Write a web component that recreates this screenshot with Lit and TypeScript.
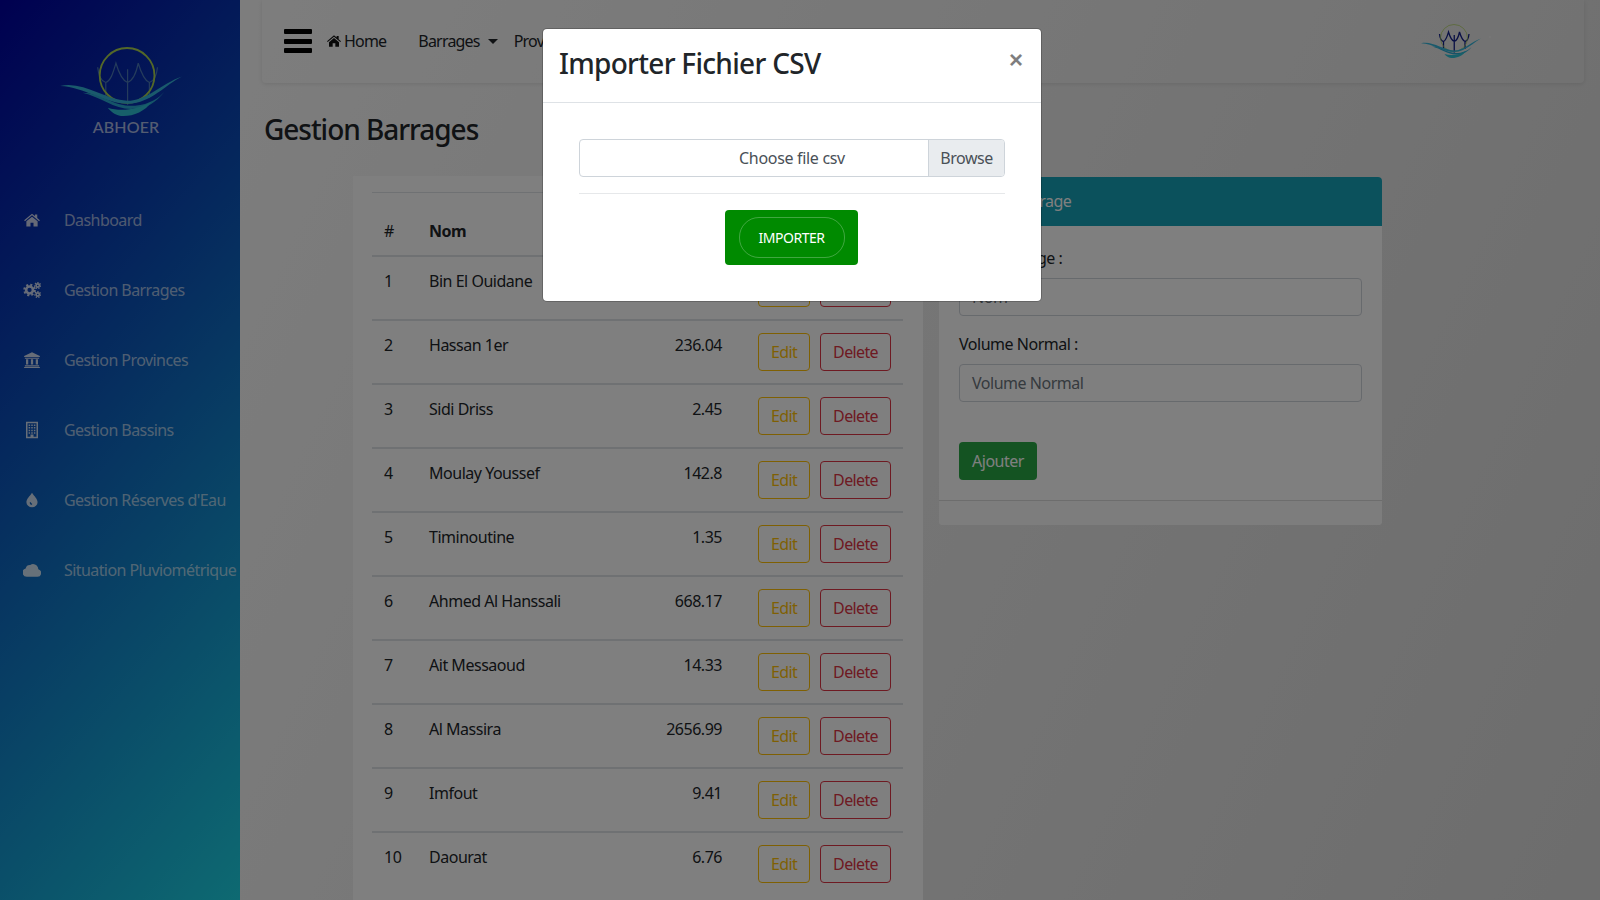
import { LitElement, html, css, svg } from "lit";
import { customElement } from "lit/decorators.js";

const rows: [number, string, string][] = [
  [1, "Bin El Ouidane", "1384.3"],
  [2, "Hassan 1er", "236.04"],
  [3, "Sidi Driss", "2.45"],
  [4, "Moulay Youssef", "142.8"],
  [5, "Timinoutine", "1.35"],
  [6, "Ahmed Al Hanssali", "668.17"],
  [7, "Ait Messaoud", "14.33"],
  [8, "Al Massira", "2656.99"],
  [9, "Imfout", "9.41"],
  [10, "Daourat", "6.76"],
];

const icons = {
  home: { vb: "0 0 24 24", p: svg`<path d="M12 3.5 1.5 12.3l1.1 1.3L12 5.8l9.4 7.8 1.1-1.3-3.5-2.9V4.5h-3v2.3zM12 7.5l-7.5 6.2V20.5h5.5v-5h4v5h5.5v-6.8z"/>` },
  cogs: { vb: "1 1 22 22", p: svg`<g fill="none" stroke="currentColor"><circle cx="9" cy="12" r="4.2" stroke-width="3.2"/><circle cx="9" cy="12" r="6.6" stroke-width="2.2" stroke-dasharray="2.6 2.6"/><circle cx="19" cy="6.5" r="2" stroke-width="2"/><circle cx="19" cy="6.5" r="3.6" stroke-width="1.5" stroke-dasharray="1.6 1.6"/><circle cx="19" cy="17.5" r="2" stroke-width="2"/><circle cx="19" cy="17.5" r="3.6" stroke-width="1.5" stroke-dasharray="1.6 1.6"/></g>` },
  bank: { vb: "0 0 24 24", p: svg`<path d="M12 1.5 1.5 6.5V8h21V6.5zM2.5 9v1.2h19V9zM4 11v7h3v-7zM10.5 11v7h3v-7zM17 11v7h3v-7zM2.5 19v1.5h19V19zM1.5 21.2v1.6h21v-1.6z"/>` },
  building: { vb: "0 0 24 24", p: svg`<path fill-rule="evenodd" d="M4 1h16v22H4zM6 3v18h4v-3h4v3h4V3zM7.5 4.5h2v2h-2zM11 4.5h2v2h-2zM14.5 4.5h2v2h-2zM7.5 8h2v2h-2zM11 8h2v2h-2zM14.5 8h2v2h-2zM7.5 11.5h2v2h-2zM11 11.5h2v2h-2zM14.5 11.5h2v2h-2zM7.5 15h2v2h-2zM11 15h2v2h-2zM14.5 15h2v2h-2z"/>` },
  tint: { vb: "1.5 1.5 21 21", p: svg`<path fill-rule="evenodd" d="M12 3.5c3 4.6 6.5 7.2 6.5 11a6.5 6 0 0 1-13 0c0-3.8 3.500-6.400 6.500-11zM9.400 14.500a2.700 2.800 0 0 0 2.700 3v-1.500a1.300 1.300 0 0 1-1.300-1.500z"/>` },
  cloud: { vb: "1.5 1.5 21 21", p: svg`<path d="M6 20a5 5 0 0 1-1.400-9.800A5.200 5.200 0 0 1 10 6.200a6 6 0 0 1 3.200-1.200 6.300 6.300 0 0 1 6.200 6 4.600 4.600 0 0 1-1 9z"/>` },
};

const navItems: [keyof typeof icons, string][] = [
  ["home", "Dashboard"],
  ["cogs", "Gestion Barrages"],
  ["bank", "Gestion Provinces"],
  ["building", "Gestion Bassins"],
  ["tint", "Gestion Réserves d'Eau"],
  ["cloud", "Situation Pluviométrique"],
];

const logo = (dark: boolean) => svg`
  <g fill="none" stroke="${dark ? "#13208a" : "#4a78b8"}" stroke-width="${dark ? 2.6 : 1.2}">
    <path d="M37 20C38 30 41 34 45 35C50 33 52 26 55 16C58 26 61 33 66.500 35C72 33 75 26 77 16C80 26 83 33 88 35C92 34 95 30 96 20M45 35V50M66.500 22V57M88 35V50"/>
  </g>
  <circle cx="66" cy="28" r="27" fill="none" stroke="#a8d050" stroke-width="1.800" opacity="${dark ? 0.75 : 1}"/>
  <path fill="#35b4d8" d="M0 38.500C22 33 44 52 66 53 86 53 100 36 120 29 104 37 90 55 67 56 44 56 24 39.500 0 38.500Z"/>
  <path fill="#2aa9d0" d="M22 45C40 45 52 59 74 58 88 57 98 50 103 44 94 55 86 61 72 61 54 62 40 49 22 45Z"/>
  <path fill="#2fc0d4" d="M47 60C60 64 76 62 90 54 84 64 70 69 60 68 54 67 50 64 47 60Z"/>
`;

@customElement("app-root")
export class AppRoot extends LitElement {
  static styles = css`
    :host {
      display: block;
      position: relative;
      width: 1600px;
      height: 900px;
      overflow: hidden;
      font-family: "Noto Sans", "Open Sans", sans-serif;
      font-size: 16px;
      line-height: 24px;
      color: #212529;
      letter-spacing: -0.03em;
    }
    * { box-sizing: border-box; }
    .page { display: flex; height: 900px; background: #f6f6f6; }

    .side {
      width: 240px;
      flex: none;
      background: linear-gradient(130deg, #0000a0 0%, #1cd4e4 100%);
      display: flex;
      flex-direction: column;
    }
    .brand { height: 185px; padding: 47px 0 0 60px; }
    .brand svg { display: block; }
    .brand-name {
      width: 132px;
      text-align: center;
      font-family: "Lato", sans-serif;
      font-size: 16px;
      font-weight: 500;
      letter-spacing: 0.01em;
      color: rgba(255, 255, 255, 0.68);
      line-height: 20px;
      margin-top: -2px;
    }
    .snav { display: flex; flex-direction: column; letter-spacing: -0.036em; }
    .snav a {
      height: 70px;
      display: flex;
      align-items: center;
      color: rgba(255, 255, 255, 0.62);
      white-space: nowrap;
    }
    .snav .ic { width: 64px; display: flex; justify-content: center; flex: none; color: rgba(255, 255, 255, 0.8); }
    .snav svg { width: 18px; height: 18px; fill: currentColor; display: block; }

    .main { flex: 1; min-width: 0; padding: 0 16px 0 22px; background: linear-gradient(115deg, #fbfbfb 0%, #dadada 100%); }
    .topbar {
      height: 83px;
      background: rgba(255, 255, 255, 0.12);
      box-shadow: 0 1px 4px rgba(0, 0, 0, 0.1);
      border-radius: 0 0 4px 4px;
      display: flex;
      align-items: flex-start;
      padding: 29px 0 0 22px;
    }
    .burger { width: 28px; height: 24px; display: flex; flex-direction: column; justify-content: space-between; flex: none; }
    .burger i { display: block; height: 5px; background: #000; border-radius: 1px; }
    .topnav { display: flex; align-items: center; margin-left: 14px; height: 24px; white-space: nowrap; letter-spacing: -0.05em; }
    .topnav svg { width: 16px; height: 16px; fill: #111; margin-right: 2px; flex: none; }
    .topnav .home { display: flex; align-items: center; margin-right: 32px; }
    .topnav .caret {
      display: inline-block; margin-left: 8px; margin-right: 16px;
      border-top: 5px solid #212529; border-left: 5px solid transparent; border-right: 5px solid transparent;
    }
    .toplogo { margin-left: auto; margin-right: 90px; margin-top: -5px; }
    .toplogo svg { display: block; }

    h2 { font-size: 28px; font-weight: 500; line-height: 34px; margin: 29px 0 0 2px; letter-spacing: -0.037em; }
    .cols { display: flex; align-items: flex-start; margin: 30px 0 0 91px; gap: 16px; }

    .tcard { width: 570px; background: #fff; padding: 16px 19px 0; flex: none; height: 900px; }
    table { width: 531px; border-collapse: collapse; table-layout: fixed; }
    th, td { padding: 12px; text-align: left; vertical-align: top; border-top: 2px solid #dee2e6; font-weight: 400; }
    thead th { border-top: 1px solid #dee2e6; font-weight: 700; padding-top: 26px; }
    thead th.hash { font-weight: 400; }
    thead tr { border-bottom: 2px solid #dee2e6; }
    .cn { width: 45px; }
    .cv { width: 329px; }
    td.name { padding-right: 24px; }
    .nv { display: flex; justify-content: space-between; }
    .acts { display: flex; gap: 10px; }
    .btn { height: 38px; border-radius: 4px; border: 1px solid; display: flex; align-items: center; padding: 0 12px; line-height: 1; letter-spacing: -0.04em; }
    .edit { border-color: #ffc107; color: #ffc107; }
    .del { border-color: #dc3545; color: #dc3545; }

    .fcard { width: 443px; flex: none; background: #fff; border-radius: 4px; overflow: hidden; margin-top: 1px; }
    .fhead { height: 49px; background: #17a2b8; color: #fff; padding: 12px 20px; }
    .fbody { padding: 20px; height: 274px; }
    label { display: block; margin-bottom: 8px; }
    .input {
      height: 38px; border: 1px solid #ced4da; border-radius: 4px; padding: 6px 12px; color: #6c757d; margin-bottom: 16px; background: #fff;
    }
    .add { display: inline-flex; align-items: center; margin-top: 24px; height: 38px; padding: 0 13px; background: #28a745; color: #fff; border-radius: 4px; }
    .ffoot { height: 25px; border-top: 1px solid rgba(0, 0, 0, 0.125); background: #fafafa; }

    .backdrop { position: absolute; inset: 0; background: rgba(0, 0, 0, 0.5); }
    .modal {
      position: absolute; left: 543px; top: 29px; width: 498px; height: 272px;
      background: #fff; border-radius: 4px; box-shadow: 0 0 0 1px rgba(0, 0, 0, 0.2);
    }
    .mhead { height: 74px; border-bottom: 1px solid #dee2e6; padding: 17px 16px 0; display: flex; justify-content: space-between; }
    .mhead h3 { margin: 0; font-size: 28px; font-weight: 500; line-height: 34px; letter-spacing: -0.025em; }
    .close { font-family: "Liberation Sans", sans-serif; font-size: 24px; font-weight: 700; color: #000; opacity: 0.5; line-height: 24px; margin: 2px 2px 0 0; letter-spacing: 0; }
    .mbody { padding: 36px 36px 0; }
    .file { display: flex; height: 38px; border: 1px solid #ced4da; border-radius: 4px; overflow: hidden; color: #495057; }
    .fname { flex: 1; text-align: center; line-height: 36px; padding-left: 76px; letter-spacing: -0.02em; }
    .browse { width: 76px; text-align: center; background: #e9ecef; border-left: 1px solid #ced4da; line-height: 36px; }
    .mbody hr { border: 0; border-top: 1px solid #e6e8ea; margin: 16px 0; }
    .imp { width: 133px; height: 55px; margin-left: 146px; background: #008a00; border-radius: 4px; display: flex; align-items: center; justify-content: center; }
    .imp span { width: 106px; height: 41px; border: 1px solid rgba(255, 255, 255, 0.25); border-radius: 20px; display: flex; align-items: center; justify-content: center; color: #fff; font-size: 14px; }
  `;

  render() {
    return html`
      <div class="page">
        <aside class="side">
          <div class="brand">
            <svg width="123" height="72" viewBox="0 0 121 71">${logo(false)}</svg>
            <div class="brand-name">ABHOER</div>
          </div>
          <nav class="snav">
            ${navItems.map(
              ([i, t]) => html`<a><span class="ic"><svg viewBox="${icons[i].vb}">${icons[i].p}</svg></span>${t}</a>`
            )}
          </nav>
        </aside>
        <div class="main">
          <div class="topbar">
            <div class="burger"><i></i><i></i><i></i></div>
            <div class="topnav">
              <span class="home"><svg viewBox="0 0 24 24">${icons.home.p}</svg>Home</span>
              <span>Barrages</span><span class="caret"></span>
              <span>Provinces</span>
            </div>
            <div class="toplogo">
              <svg width="73" height="36" viewBox="0 0 146 72">
                ${logo(true)}
                <circle cx="138" cy="26" r="2.500" fill="#fff" opacity="0.25"/>
              </svg>
            </div>
          </div>
          <h2>Gestion Barrages</h2>
          <div class="cols">
            <div class="tcard">
              <table>
                <colgroup><col class="cn" /><col class="cv" /><col /></colgroup>
                <thead>
                  <tr><th class="hash">#</th><th>Nom</th><th></th></tr>
                </thead>
                <tbody>
                  ${rows.map(
                    ([n, name, v]) => html`<tr>
                      <td>${n}</td>
                      <td class="name"><div class="nv"><span>${name}</span><span>${v}</span></div></td>
                      <td><div class="acts"><span class="btn edit">Edit</span><span class="btn del">Delete</span></div></td>
                    </tr>`
                  )}
                </tbody>
              </table>
            </div>
            <div class="fcard">
              <div class="fhead">Ajouter Barrage</div>
              <div class="fbody">
                <label>Nom Barrage :</label>
                <div class="input">Nom</div>
                <label>Volume Normal :</label>
                <div class="input">Volume Normal</div>
                <span class="add">Ajouter</span>
              </div>
              <div class="ffoot"></div>
            </div>
          </div>
        </div>
      </div>
      <div class="backdrop"></div>
      <div class="modal">
        <div class="mhead"><h3>Importer Fichier CSV</h3><span class="close">×</span></div>
        <div class="mbody">
          <div class="file"><span class="fname">Choose file csv</span><span class="browse">Browse</span></div>
          <hr />
          <div class="imp"><span>IMPORTER</span></div>
        </div>
      </div>
    `;
  }
}
